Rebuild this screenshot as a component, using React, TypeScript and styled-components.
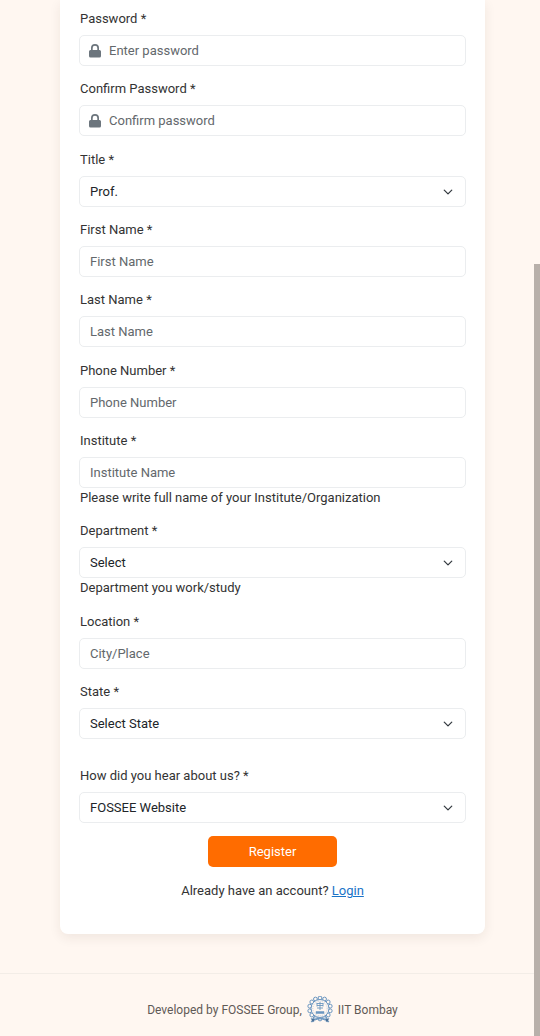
import React, { useId } from "react";
import styled, { createGlobalStyle } from "styled-components";

const GlobalStyle = createGlobalStyle`
  *, *::before, *::after { box-sizing: border-box; }
  body {
    margin: 0;
    background: #fff7f1;
    color: #333333;
    font-family: Roboto, "Liberation Sans", sans-serif;
    font-size: 13px;
    line-height: 20px;
    overflow-x: hidden;
  }
`;

const Main = styled.main`
  padding: 0 55px 39px 60px;
`;

const Card = styled.form`
  padding: 9px 20px 33px;
  background: #ffffff;
  border-radius: 0 0 8px 8px;
  box-shadow: 0 4px 12px rgba(60, 40, 20, 0.08);
`;

const Sections = styled.div`
  display: flex;
  flex-direction: column;
  gap: 14px;
`;

const Section = styled.fieldset<{ $spaced?: boolean }>`
  display: flex;
  flex-direction: column;
  gap: 13px;
  min-width: 0;
  margin: ${(p) => (p.$spaced ? "13px 0 0" : "0")};
  padding: 0;
  border: 0;
`;

const FieldGroup = styled.div`
  display: flex;
  flex-direction: column;
`;

const Label = styled.label`
  margin-bottom: 6px;
`;

const Help = styled.small`
  font-size: 13px;
`;

const ControlBox = styled.div`
  display: flex;
  align-items: center;
  height: 31px;
  margin: 0 -1px;
  padding: 0 12px 0 10px;
  gap: 8px;
  background: #ffffff;
  border: 1px solid #ebedef;
  border-radius: 5px;
`;

const Input = styled.input`
  flex: 1;
  min-width: 0;
  padding: 0;
  border: 0;
  outline: 0;
  background: transparent;
  color: #212529;
  font: inherit;
  &::placeholder { color: #63686c; opacity: 1; }
`;

const Select = styled.select`
  flex: 1;
  min-width: 0;
  padding: 0;
  border: 0;
  outline: 0;
  appearance: none;
  background: transparent;
  color: #212529;
  font: inherit;
`;

const LockSvg = styled.svg`
  flex: none;
  width: 12px;
  height: 14px;
  margin-left: -1px;
  fill: #6c757d;
`;

const ChevronSvg = styled.svg`
  flex: none;
  width: 10px;
  height: 10px;
  fill: none;
  stroke: #343a40;
  stroke-width: 2;
  stroke-linecap: round;
  stroke-linejoin: round;
`;

const Actions = styled.div`
  display: flex;
  flex-direction: column;
  align-items: center;
  gap: 14px;
  margin-top: 13px;
`;

const RegisterButton = styled.button`
  width: 129px;
  height: 31px;
  padding: 0;
  border: 0;
  border-radius: 5px;
  background: #ff6c00;
  color: #ffffff;
  font: inherit;
`;

const LoginLine = styled.p`
  margin: 0;
`;

const Link = styled.a`
  color: #1a73c8;
  text-decoration: underline;
`;

const Footer = styled.footer`
  display: flex;
  align-items: center;
  justify-content: center;
  gap: 5px;
  padding: 22px 0 12px 5px;
  border-top: 1px solid #f3ede7;
  color: #5f5a56;
  font-size: 12px;
`;

const Emblem = styled.svg`
  width: 26px;
  height: 28px;
  fill: none;
  stroke: #6b96c0;
`;

const ScrollThumb = styled.div`
  position: fixed;
  top: 264px;
  right: 0;
  bottom: 0;
  width: 6px;
  background: #b8b0aa;
`;

function LockIcon() {
  return (
    <LockSvg viewBox="0 0 12 14" aria-hidden="true">
      <path
        fillRule="evenodd"
        d="M2 6V4a4 4 0 0 1 8 0v2h.5A1.5 1.5 0 0 1 12 7.500V12a1.500 1.500 0 0 1-1.500 1.500h-9A1.500 1.500 0 0 1 0 12V7.500A1.500 1.500 0 0 1 1.500 6zM3.700 6h4.600V4a2.300 2.300 0 0 0-4.600 0z"
      />
    </LockSvg>
  );
}

function Chevron() {
  return (
    <ChevronSvg viewBox="0 0 16 16" aria-hidden="true">
      <path d="m2 5 6 6 6-6" />
    </ChevronSvg>
  );
}

type FieldProps = {
  label: string;
  placeholder?: string;
  options?: string[];
  help?: string;
  type?: string;
};

function Field({ label, placeholder, options, help, type = "text" }: FieldProps) {
  const id = useId();
  return (
    <FieldGroup>
      <Label htmlFor={id}>{label} *</Label>
      <ControlBox>
        {type === "password" && <LockIcon />}
        {options ? (
          <>
            <Select id={id}>
              {options.map((o) => (
                <option key={o}>{o}</option>
              ))}
            </Select>
            <Chevron />
          </>
        ) : (
          <Input id={id} type={type} placeholder={placeholder} />
        )}
      </ControlBox>
      {help && <Help>{help}</Help>}
    </FieldGroup>
  );
}

const teeth = Array.from({ length: 14 }, (_, i) => {
  const a = (i / 14) * Math.PI * 2 - Math.PI / 2;
  return { x: 13 + Math.cos(a) * 10.5, y: 12.5 + Math.sin(a) * 10.5 };
});

function InstituteEmblem() {
  return (
    <Emblem viewBox="0 0 26 28" role="img" aria-label="IIT Bombay emblem">
      {teeth.map((t, i) => (
        <circle key={i} cx={t.x} cy={t.y} r="1.9" strokeWidth="1" />
      ))}
      <circle cx="13" cy="12.500" r="9" fill="#fff7f1" strokeWidth="1" />
      <circle cx="13" cy="12.500" r="7.200" strokeWidth="0.400" strokeDasharray="1 1" />
      <path d="M9.500 7.500h7M10 9.500h6M13 6v8M10 12h6M10 7.500v3M16 7.500v3" strokeWidth="0.900" />
      <path d="M9 15.500h8v2H9z" fill="#6b96c0" strokeWidth="0.500" />
      <path d="M6 21.500c4 1.500 10 1.500 14 0M6 24c4-1.500 10-1.500 14 0" strokeWidth="0.900" />
      <path d="M4 22.500l3.500.5-.5 2.500-3 .5 1-1.700zM22 22.500l-3.500.5.500 2.500 3 .5-1-1.700z" fill="#44698f" strokeWidth="0.500" />
    </Emblem>
  );
}

export default function App() {
  return (
    <>
      <GlobalStyle />
      <Main>
        <Card onSubmit={(e) => e.preventDefault()}>
          <Sections>
            <Section>
              <Field label="Password" type="password" placeholder="Enter password" />
              <Field label="Confirm Password" type="password" placeholder="Confirm password" />
            </Section>
            <Section>
              <Field label="Title" options={["Prof."]} />
              <Field label="First Name" placeholder="First Name" />
              <Field label="Last Name" placeholder="Last Name" />
            </Section>
            <Section>
              <Field label="Phone Number" type="tel" placeholder="Phone Number" />
              <Field
                label="Institute"
                placeholder="Institute Name"
                help="Please write full name of your Institute/Organization"
              />
              <Field label="Department" options={["Select"]} help="Department you work/study" />
            </Section>
            <Section>
              <Field label="Location" placeholder="City/Place" />
              <Field label="State" options={["Select State"]} />
            </Section>
            <Section $spaced>
              <Field label="How did you hear about us?" options={["FOSSEE Website"]} />
            </Section>
          </Sections>
          <Actions>
            <RegisterButton type="submit">Register</RegisterButton>
            <LoginLine>
              Already have an account? <Link href="#login">Login</Link>
            </LoginLine>
          </Actions>
        </Card>
      </Main>
      <Footer>
        <span>Developed by FOSSEE Group,</span>
        <InstituteEmblem />
        <span>IIT Bombay</span>
      </Footer>
      <ScrollThumb />
    </>
  );
}
